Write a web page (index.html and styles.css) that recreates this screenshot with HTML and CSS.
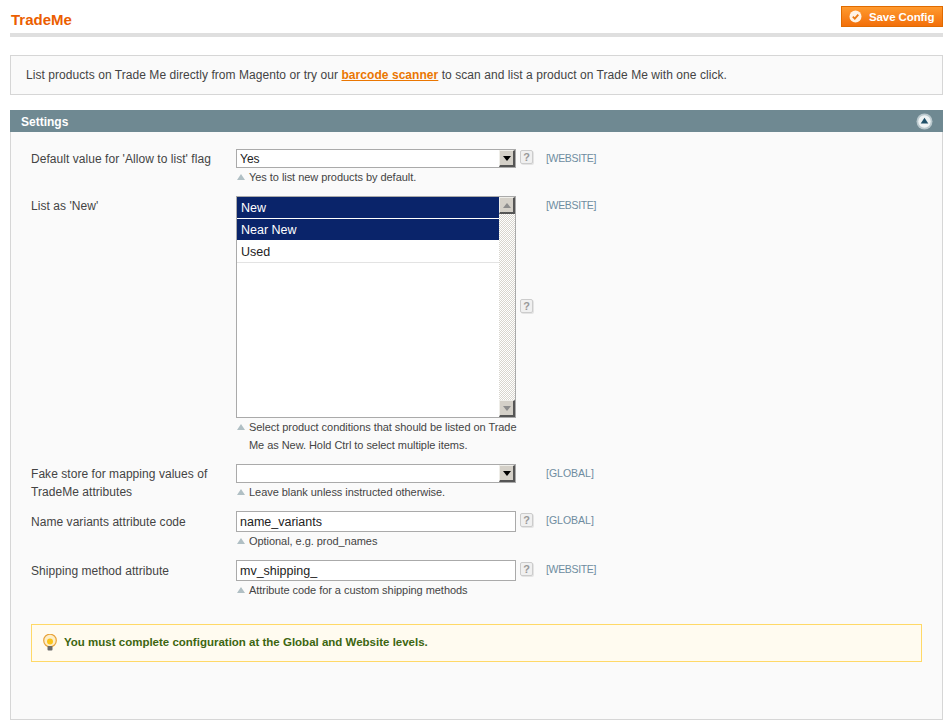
FILE: index.html
```html
<!DOCTYPE html>
<html>
<head>
<meta charset="utf-8" />
<title>TradeMe</title>
<link rel="stylesheet" href="styles.css">
</head>
<body>
<div class="page">
  <div class="head">
    <h3 class="title">TradeMe</h3>
    <div class="save-btn">
      <svg class="save-icon" width="13" height="13" viewBox="0 0 13 13"><circle cx="6.5" cy="6.5" r="6" fill="#fff3e4"/><path d="M3.8 6.6l2 2 3.5-4" fill="none" stroke="#ea7a12" stroke-width="1.8"/></svg>
      <span>Save Config</span>
    </div>
  </div>

  <div class="intro">List products on Trade Me directly from Magento or try our <a href="#">barcode scanner</a> to scan and list a product on Trade Me with one click.</div>

  <div class="section-head">
    <span>Settings</span>
    <svg width="17" height="17" viewBox="0 0 17 17"><circle cx="8.5" cy="8.5" r="8" fill="#b9c8cd"/><circle cx="8.5" cy="8.5" r="6.2" fill="#eef3f4"/><path d="M8.5 4.8l3.8 5.6H4.7z" fill="#1f5068"/></svg>
  </div>

  <div class="section-body">
    <div class="row">
      <div class="label">Default value for 'Allow to list' flag</div>
      <div class="field select">
        <span class="field-text">Yes</span>
        <span class="arrow-btn"><i class="arrow-down"></i></span>
      </div>
      <div class="help">?</div>
      <div class="scope website">[WEBSITE]</div>
      <div class="note"><p>Yes to list new products by default.</p></div>
    </div>

    <div class="row">
      <div class="label">List as 'New'</div>
      <div class="listbox">
        <div class="options">
          <div class="option selected">New</div>
          <div class="option selected">Near New</div>
          <div class="option">Used</div>
        </div>
        <div class="scrollbar">
          <span class="arrow-btn"><i class="arrow-up grey"></i></span>
          <span class="arrow-btn"><i class="arrow-down grey"></i></span>
        </div>
      </div>
      <div class="help">?</div>
      <div class="scope website">[WEBSITE]</div>
      <div class="note"><p>Select product conditions that should be listed on Trade Me as New. Hold Ctrl to select multiple items.</p></div>
    </div>

    <div class="row">
      <div class="label">Fake store for mapping values of TradeMe attributes</div>
      <div class="field select">
        <span class="field-text"></span>
        <span class="arrow-btn"><i class="arrow-down"></i></span>
      </div>
      <div class="scope">[GLOBAL]</div>
      <div class="note"><p>Leave blank unless instructed otherwise.</p></div>
    </div>

    <div class="row row-input">
      <div class="label">Name variants attribute code</div>
      <div class="field text">name_variants</div>
      <div class="help">?</div>
      <div class="scope">[GLOBAL]</div>
      <div class="note"><p>Optional, e.g. prod_names</p></div>
    </div>

    <div class="row row-input">
      <div class="label">Shipping method attribute</div>
      <div class="field text">mv_shipping_</div>
      <div class="help">?</div>
      <div class="scope website">[WEBSITE]</div>
      <div class="note"><p>Attribute code for a custom shipping methods</p></div>
    </div>

    <div class="message">
      <svg width="16" height="17" viewBox="0 0 16 17"><circle cx="8" cy="6.5" r="6.3" fill="#fdeec8" stroke="#e8a33a" stroke-width="1.2"/><circle cx="8" cy="7.5" r="3" fill="#fcc419"/><rect x="5.5" y="12" width="5" height="4.5" rx="1" fill="#6b6b6b"/></svg>
      <span>You must complete configuration at the Global and Website levels.</span>
    </div>
  </div>
</div>
</body>
</html>
```

FILE: styles.css
```css
*{ padding:0; margin:0; box-sizing:border-box; }
html,body{ background:#fff; }
body{ font-family:"Liberation Sans",Arial,sans-serif; font-size:12px; color:#444; }
.page{ padding:6px 8px 0 10px; height:727px; overflow:hidden; }

/* header */
.head{ display:flex; justify-content:space-between; align-items:flex-start; height:31px; border-bottom:4px solid #dfdfdf; }
.title{ font-size:15px; line-height:28px; font-weight:bold; color:#eb5e00; margin-left:1px; }
.save-btn{ display:flex; align-items:center; width:102px; height:21px; padding-left:7px; border:1px solid #e06b00; background:linear-gradient(#ff9a2e,#f26f0a); color:#fff; font-size:11.5px; font-weight:bold; letter-spacing:-.1px; }
.save-icon{ margin-right:7px; }

.intro{ margin-top:18px; height:40px; line-height:38px; padding-left:15px; background:#fafafa; border:1px solid #d6d6d6; color:#444; letter-spacing:.056px; }
.intro a{ color:#ea7601; font-weight:bold; }

/* section */
.section-head{ display:flex; justify-content:space-between; align-items:center; margin-top:15px; height:22px; padding:1px 10px 0 11px; background:#6f8992; color:#fff; font-weight:bold; }
.section-head svg{ margin-top:-1px; }
.section-body{ height:588px; padding:17px 20px 0; background:#fafafa; border:1px solid #d6d6d6; border-top:0; }

/* form rows */
.row{ display:grid; grid-template-columns:205px 280px 30px 1fr; grid-template-rows:auto auto; padding-bottom:10px; }
.label{ grid-row:1 / span 2; grid-column:1; padding-top:1px; line-height:18px; padding-right:20px; letter-spacing:.05px; }
.row-input .label{ padding-top:2px; }
.field{ grid-column:2; grid-row:1; background:#fff; border:1px solid #aaa; }
.select{ display:flex; justify-content:space-between; height:19px; line-height:19px; padding-left:3px; color:#222; }
.text{ height:21px; line-height:21px; padding-left:3px; font-size:12.5px; color:#222; }
.help{ grid-column:3; grid-row:1; align-self:center; width:13px; height:14px; margin:0 0 3px 4px; border:1px solid #ccc; border-radius:2px; background:#f0f0f0; box-shadow:1px 1px 0 #e4e4e4; color:#999; font-size:11px; font-weight:bold; line-height:12px; text-align:center; }
.scope{ grid-column:4; grid-row:1; font-size:10.5px; line-height:18px; color:#6e8ca0; }
.website{ letter-spacing:-.33px; }
.note{ grid-column:2; grid-row:2; font-size:11px; line-height:18px; letter-spacing:-.05px; }
.note p{ position:relative; padding-left:13px; margin-right:-6px; }
.note p:before{ content:""; position:absolute; left:1px; top:6px; border-left:4px solid transparent; border-right:4px solid transparent; border-bottom:6px solid #b0bfc4; }

/* fake native controls */
.arrow-btn{ display:flex; align-items:center; justify-content:center; width:16px; height:17px; background:#d4d0c8; border-top:1px solid #efeee9; border-left:1px solid #efeee9; border-right:2px solid #555; border-bottom:2px solid #555; flex:none; }
.arrow-down{ width:0; height:0; border-left:4px solid transparent; border-right:4px solid transparent; border-top:5px solid #000; }
.arrow-up{ width:0; height:0; border-left:4px solid transparent; border-right:4px solid transparent; border-bottom:5px solid #000; }
.arrow-down.grey{ border-top-color:#8d8d8d; }
.arrow-up.grey{ border-bottom-color:#8d8d8d; }

.listbox{ grid-column:2; grid-row:1; display:flex; height:222px; background:#fff; border:1px solid #aaa; }
.options{ flex:1; }
.option{ height:22px; line-height:23px; padding-left:4px; font-size:12.5px; color:#222; border-bottom:1px solid #e3e3e3; }
.option.selected{ background:#0a246a; color:#fff; border-bottom-color:#fff; }
.scrollbar{ display:flex; flex-direction:column; justify-content:space-between; width:16px; background:repeating-conic-gradient(#d8d5ce 0 25%,#fff 0 50%) 0 0 / 2px 2px; }

/* message */
.message{ display:flex; align-items:center; gap:6px; height:38px; margin-top:15px; padding:0 0 2px 10px; background:#fffbf0; border:1px solid #ffd967; color:#3d6611; font-size:11.5px; font-weight:bold; }
```
